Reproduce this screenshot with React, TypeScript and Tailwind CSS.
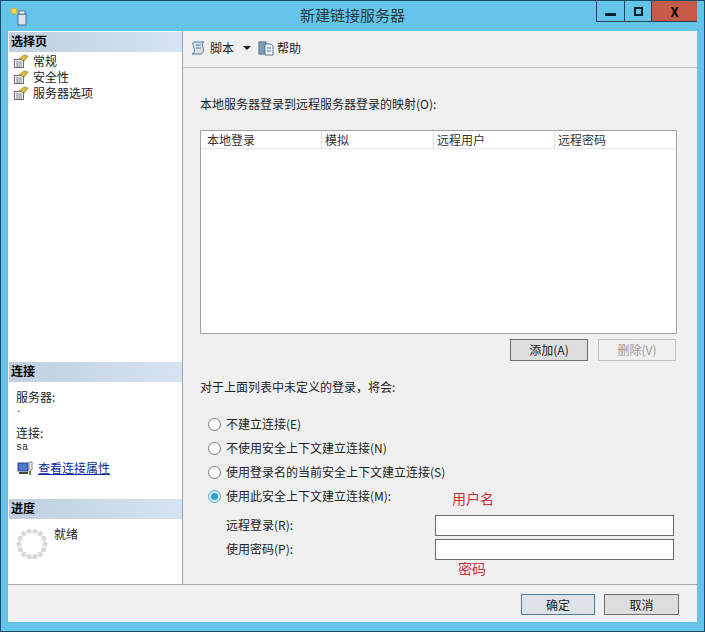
const font = { fontFamily: '"Noto Sans CJK SC", "Liberation Sans", sans-serif' };

function PageIcon() {
  return (
    <svg width="16" height="14" viewBox="0 0 16 14" className="shrink-0">
      <rect x="1.5" y="5.5" width="9" height="8" fill="#f4f4f4" stroke="#5f6a72" />
      <path d="M3 8h6M3 10h6M3 12h6" stroke="#7d8a94" />
      <path d="M6 5 11 1l4 1-4 5z" fill="#d8b84a" stroke="#8a7426" strokeWidth="0.7" />
    </svg>
  );
}

function SectionHeader({ label }: { label: string }) {
  return (
    <div className="flex h-[20px] shrink-0 items-center bg-gradient-to-r from-[#bfcfdf] to-[#d6e4f1] pb-[2px] pl-[2px] text-[12px] font-bold text-black">
      {label}
    </div>
  );
}

function Spinner() {
  const dots = Array.from({ length: 14 }, (_, i) => (i / 14) * Math.PI * 2);
  return (
    <svg width="32" height="32" viewBox="0 0 32 32" className="shrink-0">
      {dots.map((a) => (
        <circle key={a} cx={16 + 13 * Math.cos(a)} cy={16 + 13 * Math.sin(a)} r="2.6" fill="#d9d9d9" />
      ))}
    </svg>
  );
}

function Radio({ label, checked }: { label: string; checked?: boolean }) {
  return (
    <div className="flex h-6 items-center text-[12px] text-[#222]">
      <span className={`mr-[5px] flex h-[13px] w-[13px] items-center justify-center rounded-full border ${checked ? "border-[#5aa9cf] bg-[#d8eef8]" : "border-[#7a7a7a] bg-white"}`}>
        {checked && <span className="h-[7px] w-[7px] rounded-full bg-[#2f9fd6]" />}
      </span>
      {label}
    </div>
  );
}

export default function App() {
  return (
    <div style={font} className="relative flex h-[632px] w-[705px] flex-col overflow-hidden border border-[#14506e] bg-[#64c5e8] text-[12px] text-black">
      <div className="relative flex h-[30px] shrink-0 items-center justify-center pb-[2px] text-[15px] text-[#2b3a42]">
        <svg width="20" height="20" viewBox="0 0 20 20" className="absolute left-[8px] top-[5px]">
          <circle cx="5" cy="5" r="3" fill="#f2d64b" stroke="#d8a92a" />
          <rect x="9" y="8" width="8" height="11" fill="#dbe6f2" stroke="#4c6f96" />
          <path d="M10 5h6v3h-6z" fill="#fff" stroke="#4c6f96" />
        </svg>
        <span>新建链接服务器</span>
        <div className="absolute right-[7px] top-0 flex h-[21px] border-b border-l border-[#1d4459]">
          <div className="flex w-[28px] items-end justify-center border-r border-[#1d4459] pb-[5px]">
            <span className="h-[3px] w-[11px] bg-[#06202f]" />
          </div>
          <div className="flex w-[26px] items-center justify-center">
            <span className="h-[9px] w-[9px] border-2 border-[#06202f]" />
          </div>
          <div className="flex w-[46px] items-center justify-center border-l border-[#1d4459] bg-[#c75b4a] text-[13px] leading-none font-bold text-black">
            X
          </div>
        </div>
      </div>

      <div className="mx-[7px] flex min-h-0 flex-1 flex-col bg-[#f0f0f0]">
        <div className="flex min-h-0 flex-1 border-b border-[#a5a5a5]">
          <aside className="flex w-[175px] shrink-0 flex-col border-r border-[#a0a0a0] bg-white pl-[1px] pt-[1px]">
            <SectionHeader label="选择页" />
            <div className="flex flex-col pl-[4px] pt-[1px] text-[12px] leading-[16px] text-[#222]">
              {["常规", "安全性", "服务器选项"].map((item) => (
                <div key={item} className="flex h-[16px] items-center gap-[4px]">
                  <PageIcon />
                  {item}
                </div>
              ))}
            </div>
            <div className="flex-1" />
            <SectionHeader label="连接" />
            <div className="flex h-[117px] shrink-0 flex-col pl-[7px] pt-[7px] leading-[16px] text-[#222]">
              <div>服务器:</div>
              <div className="h-[15px] font-mono text-[9px] leading-[10px]">.</div>
              <div className="mt-[5px]">连接:</div>
              <div className="mt-[1px] text-[10px] leading-[11px]" style={{ fontFamily: '"Liberation Mono", monospace' }}>sa</div>
              <div className="mt-[7px] flex items-center gap-[5px] pl-[1px]">
                <svg width="16" height="16" viewBox="0 0 16 16" className="shrink-0">
                  <rect x="1" y="3" width="10" height="8" fill="#4e78c8" stroke="#2a4a90" />
                  <path d="M2 13h9" stroke="#444" strokeWidth="2" />
                  <path d="M12 2h3v8h-3z" fill="#eee" stroke="#888" />
                  <path d="M13 15v-4" stroke="#4a9a3a" strokeWidth="2" />
                </svg>
                <span className="text-[#0a2a9a] underline">查看连接属性</span>
              </div>
            </div>
            <SectionHeader label="进度" />
            <div className="flex h-[65px] shrink-0 gap-[6px] pl-[7px] pt-[9px]">
              <Spinner />
              <span className="-mt-[2px] leading-[16px] text-[#222]">就绪</span>
            </div>
          </aside>

          <main className="flex min-w-0 flex-1 flex-col">
            <div className="flex h-[37px] shrink-0 items-center gap-[3px] border-b border-[#c0c0c0] pb-[3px] pl-[7px] text-[12px] text-[#222]">
              <svg width="16" height="16" viewBox="0 0 16 16">
                <path d="M4 2h10c-2 0-2 3-1 5s1 6-2 7H2c2-1 3-3 2-6S2 2 4 2z" fill="#d5dfe9" stroke="#5a7a96" />
                <path d="M6 5h5M6 8h5" stroke="#5a7a96" />
              </svg>
              <span className="ml-[1px]">脚本</span>
              <span className="ml-[6px] mr-[4px] h-0 w-0 border-x-[4px] border-t-[4px] border-x-transparent border-t-[#222]" />
              <svg width="16" height="16" viewBox="0 0 16 16">
                <rect x="1" y="2" width="7" height="12" fill="#7f9cb8" stroke="#4a6a88" />
                <path d="M7 4h6l2 2v9H7z" fill="#eef2f6" stroke="#5a7a96" />
                <path d="M9 8h4M9 11h4" stroke="#5a7a96" />
              </svg>
              <span>帮助</span>
            </div>

            <div className="flex min-h-0 flex-1 flex-col pl-[17px] pr-[20px]">
              <div className="mt-[27px] h-[18px] leading-[18px] text-[#222]">本地服务器登录到远程服务器登录的映射(O):</div>
              <div className="mt-[17px] h-[204px] shrink-0 border border-[#a0a0a0] bg-white">
                <div className="grid h-[18px] grid-cols-[121px_112px_121px_1fr] border-b border-[#e8e8e8] leading-[18px] text-[#333]">
                  {["本地登录", "模拟", "远程用户", "远程密码"].map((col) => (
                    <div key={col} className="border-r border-[#e0e0e0] pl-[3px] first:pl-[6px] last:border-r-0">
                      {col}
                    </div>
                  ))}
                </div>
              </div>
              <div className="mr-[1px] mt-[5px] flex justify-end gap-[10px]">
                <div className="flex h-[22px] w-[78px] items-center justify-center border border-[#6e6e6e] bg-[#dddddd] text-[#222]">添加(A)</div>
                <div className="flex h-[22px] w-[78px] items-center justify-center border border-[#c4c4c4] bg-[#f0f0f0] text-[#9a9a9a]">删除(V)</div>
              </div>
              <div className="mt-[17px] h-[18px] leading-[18px] text-[#222]">对于上面列表中未定义的登录，将会:</div>
              <div className="mt-[16px] flex flex-col pl-[8px]">
                <Radio label="不建立连接(E)" />
                <Radio label="不使用安全上下文建立连接(N)" />
                <Radio label="使用登录名的当前安全上下文建立连接(S)" />
                <Radio label="使用此安全上下文建立连接(M):" checked />
              </div>
              <div className="mt-[7px] flex flex-col gap-[3px] pl-[26px] pr-[3px]">
                <div className="flex h-[21px] items-center justify-between text-[#222]">
                  <span className="-mt-[2px]">远程登录(R):</span>
                  <div className="h-[21px] w-[239px] border border-[#6a6a6a] bg-white" />
                </div>
                <div className="flex h-[21px] items-center justify-between text-[#222]">
                  <span className="-mt-[2px]">使用密码(P):</span>
                  <div className="h-[21px] w-[239px] border border-[#6a6a6a] bg-white" />
                </div>
              </div>
            </div>
          </main>
        </div>

        <div className="flex h-[37px] shrink-0 items-start justify-end gap-[9px] pr-[18px] pt-[9px] text-[#222]">
          <div className="flex h-[21px] w-[74px] items-center justify-center border border-[#4f7c99] bg-[#dde3e8]">确定</div>
          <div className="flex h-[21px] w-[75px] items-center justify-center border border-[#6e6e6e] bg-[#dddddd]">取消</div>
        </div>
      </div>
      <div className="h-[9px] shrink-0" />

      <span className="absolute left-[451px] top-[487px] text-[14px] leading-[20px] text-[#c8313a]">用户名</span>
      <span className="absolute left-[457px] top-[557px] text-[14px] leading-[20px] text-[#c8313a]">密码</span>
    </div>
  );
}
